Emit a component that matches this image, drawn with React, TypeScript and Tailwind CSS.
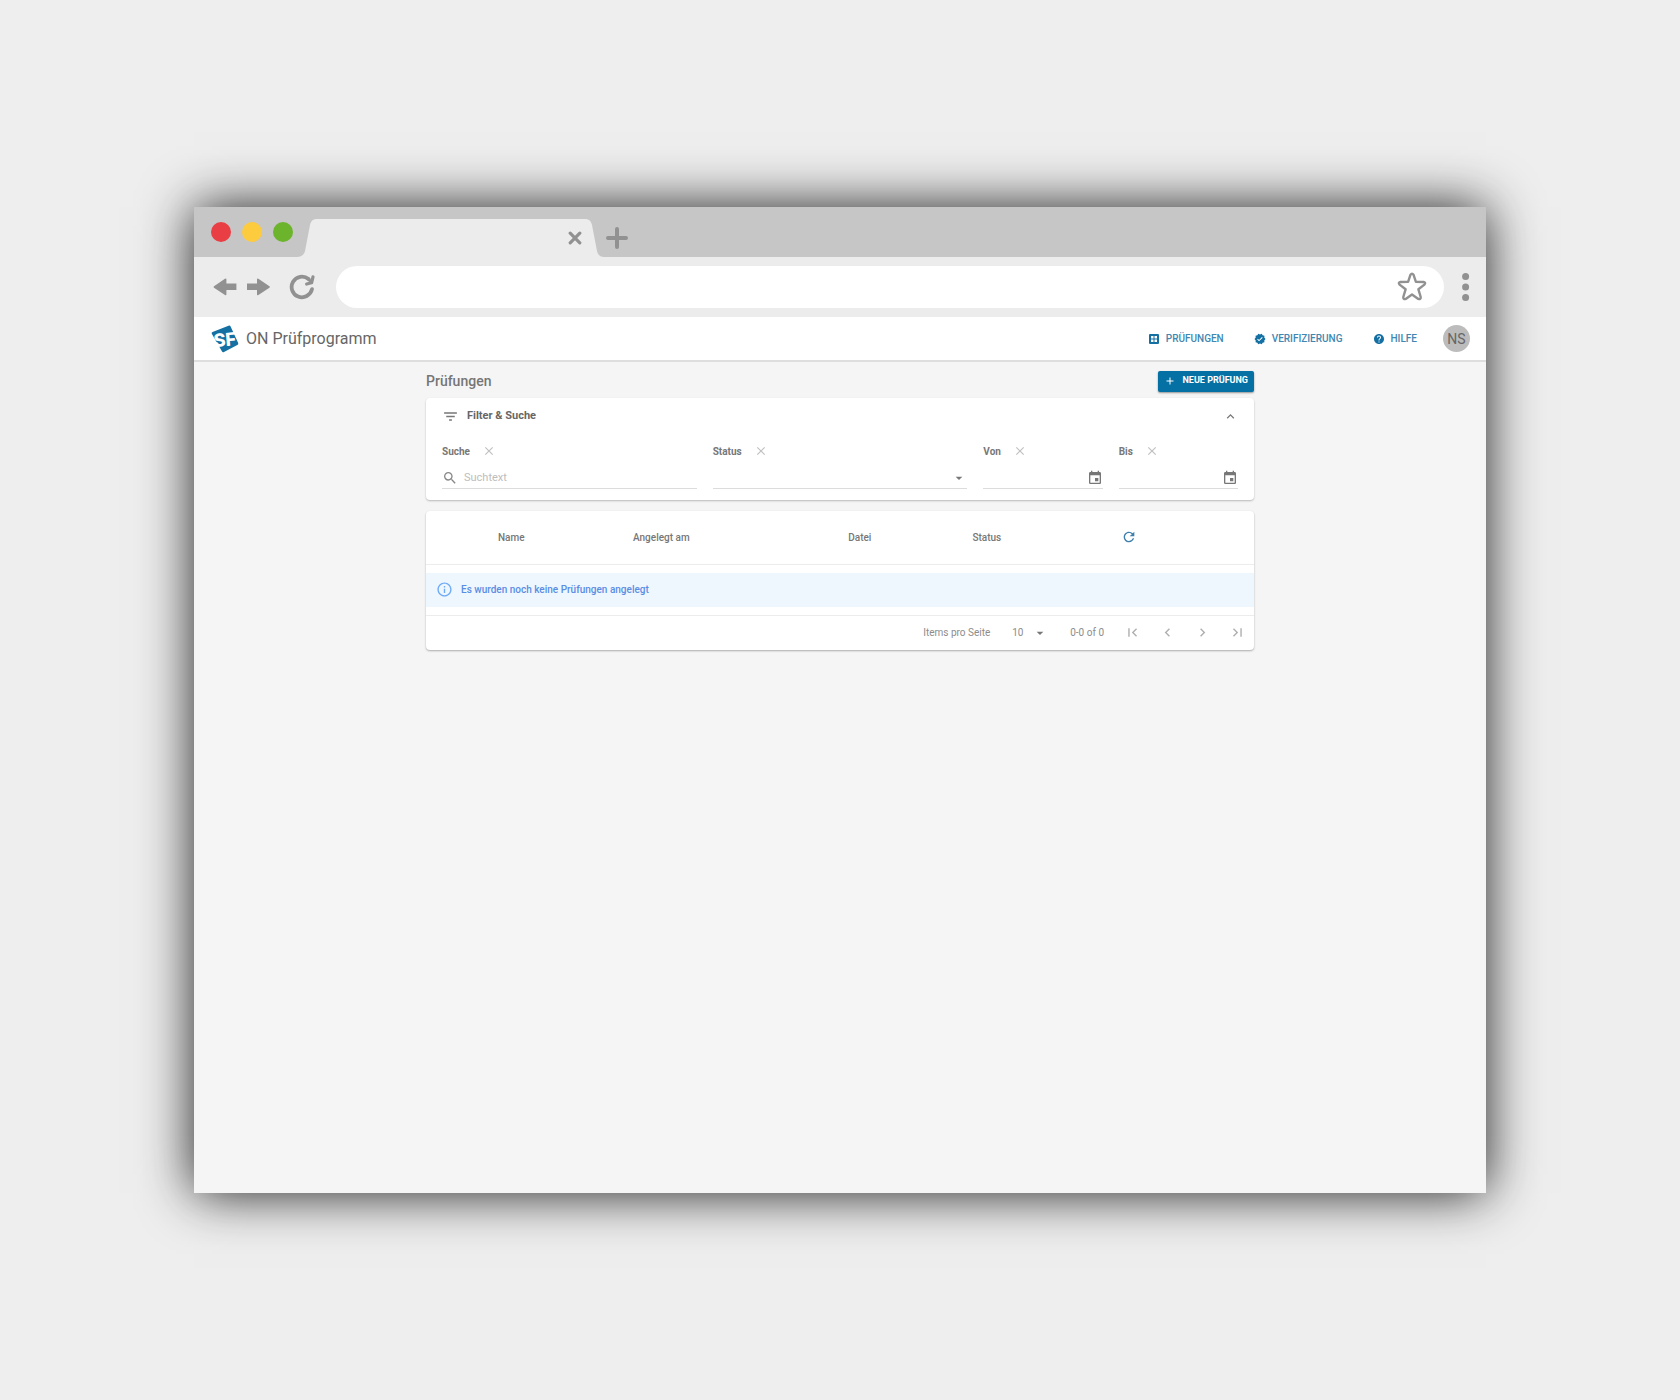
import React from "react";
import {
  MdAdd,
  MdArrowDropDown,
  MdChevronLeft,
  MdChevronRight,
  MdClose,
  MdEvent,
  MdFilterList,
  MdFirstPage,
  MdHelp,
  MdInfoOutline,
  MdKeyboardArrowUp,
  MdLastPage,
  MdRefresh,
  MdSearch,
  MdVerified,
} from "react-icons/md";

function TabStrip() {
  return (
    <div className="flex h-[50px] items-end bg-[#c6c6c6] pl-[17px]">
      <div className="flex gap-[11px] self-start pt-[15px]">
        <button aria-label="Schließen" className="size-5 rounded-full bg-[#e93e43]" />
        <button aria-label="Minimieren" className="size-5 rounded-full bg-[#fdcb3e]" />
        <button aria-label="Maximieren" className="size-5 rounded-full bg-[#6cb42c]" />
      </div>
      <div className="ml-1 flex h-[38px]">
        <svg width="20" height="38" viewBox="0 0 20 38" fill="#ececec" aria-hidden="true">
          <path d="M0 38C4 38 7 36 8 32L13 6C14 2 16 0 20 0V38Z" />
        </svg>
        <div className="flex w-[267px] items-center justify-end bg-[#ececec] pr-0.5">
          <button aria-label="Tab schließen">
            <svg width="14" height="14" viewBox="0 0 14 14" fill="none" stroke="#919191" strokeWidth="3.2" strokeLinecap="round">
              <path d="M2.2 2.2l9.6 9.6M11.8 2.2l-9.6 9.6" />
            </svg>
          </button>
        </div>
        <svg width="20" height="38" viewBox="0 0 20 38" fill="#ececec" aria-hidden="true">
          <path d="M20 38C16 38 14 36 13 32L8 6C7 2 5 0 1 0H0V38Z" />
        </svg>
      </div>
      <button aria-label="Neuer Tab" className="mb-2 ml-0.5">
        <svg width="22" height="22" viewBox="0 0 22 22" fill="none" stroke="#919191" strokeWidth="4" strokeLinecap="round">
          <path d="M11 2v18M2 11h18" />
        </svg>
      </button>
    </div>
  );
}

function AddressBar() {
  return (
    <div className="flex h-[60px] items-center bg-[#ececec] pr-4 pl-[19px] text-[#919191]">
      <button aria-label="Zurück">
        <svg width="24" height="18" viewBox="0 0 24 18" fill="currentColor">
          <path d="M1 8.300L12 .8Q13.400 0 13.400 1.500V5.500H23.400V12H13.400V16.200Q13.400 17.800 12 17L1 9.700Q0 9 1 8.300Z" />
        </svg>
      </button>
      <button aria-label="Vorwärts" className="ml-2.5">
        <svg width="24" height="18" viewBox="0 0 24 18" fill="currentColor">
          <path d="M22.400 8.300L11.400 .8Q10 0 10 1.500V5.500H0V12H10V16.200Q10 17.800 11.400 17L22.400 9.700Q23.400 9 22.400 8.300Z" />
        </svg>
      </button>
      <button aria-label="Neu laden" className="ml-[18px]">
        <svg width="27" height="26" viewBox="0 0 27 26" fill="none" stroke="currentColor" strokeWidth="3.8" strokeLinecap="round" strokeLinejoin="round">
          <path d="M23 15.200A10.300 10.300 0 1 1 19.500 5" />
          <path d="M24 2.800L22.600 8.800L17.600 10" strokeWidth="3.200" />
          <path d="M19.200 4.800L22 8" strokeWidth="3" />
        </svg>
      </button>
      <div className="ml-5 flex h-[42px] flex-1 items-center rounded-full bg-white pr-[17px] pl-5">
        <input aria-label="Adresse" className="h-full min-w-0 flex-1 bg-transparent outline-none" />
        <button aria-label="Lesezeichen">
          <svg width="30" height="30" viewBox="0 0 30 30" fill="none" stroke="currentColor" strokeWidth="2.400" strokeLinejoin="round">
            <path d="M13.500 2.700Q15 .6 16.500 2.700L18.900 9.800L26.600 10Q29.200 10.600 27.400 12.600L21.400 17.300L23.700 25Q23.900 27.700 21.300 26.900L15 22.400L8.700 26.900Q6.100 27.700 6.300 25L8.600 17.300L2.600 12.600Q.8 10.600 3.400 10L11.100 9.800Z" />
          </svg>
        </button>
      </div>
      <button aria-label="Menü" className="ml-[18px]">
        <svg width="8" height="30" viewBox="0 0 8 30" fill="currentColor">
          <circle cx="3.600" cy="4.400" r="3.500" />
          <circle cx="3.600" cy="15" r="3.500" />
          <circle cx="3.600" cy="25.600" r="3.500" />
        </svg>
      </button>
    </div>
  );
}

function Logo() {
  return (
    <svg width="28" height="28" viewBox="0 0 28 28" role="img" aria-label="SF">
      <path d="M1.500 7L17.500 .8Q19 .2 19.600 1.600L27.200 18Q27.700 19.400 26.300 20L13 27Q11.500 27.600 10.900 26.200L.8 8.800Q.2 7.600 1.500 7Z" fill="#1470a3" />
      <text x="2.500" y="21" fontFamily="Inter, sans-serif" fontWeight="800" fontSize="18" fill="#fff" transform="rotate(-5 14 14)">SF</text>
    </svg>
  );
}

function GridIcon() {
  return (
    <svg width="12" height="12" viewBox="0 0 12 12" fill="currentColor" aria-hidden="true">
      <path fillRule="evenodd" d="M2 1h8a1 1 0 0 1 1 1v8a1 1 0 0 1-1 1H2a1 1 0 0 1-1-1V2a1 1 0 0 1 1-1ZM3 3v2.500h2.500V3ZM6.500 3v2.500H9V3ZM3 6.500V9h2.500V6.500ZM6.500 6.500V9H9V6.500Z" />
    </svg>
  );
}

function NavLink({ icon, label }: { icon: React.ReactNode; label: string }) {
  return (
    <a href="#" className="flex items-center gap-1.5 text-[#1470a3]">
      {icon}
      <span className="text-[10px] font-medium text-[#4187b1]">{label}</span>
    </a>
  );
}

function AppHeader() {
  return (
    <header className="flex h-[45px] items-center border-b-2 border-[#dedede] bg-white pr-4 pl-[17px]">
      <Logo />
      <span className="ml-[7px] flex-1 text-base text-[#666]">ON Prüfprogramm</span>
      <nav className="flex items-center gap-[30px]">
        <NavLink icon={<GridIcon />} label="PRÜFUNGEN" />
        <NavLink icon={<MdVerified size={12} />} label="VERIFIZIERUNG" />
        <NavLink icon={<MdHelp size={12} />} label="HILFE" />
      </nav>
      <button className="ml-[26px] size-[27px] rounded-full bg-[#bcbcbc] text-sm text-[#666]">NS</button>
    </header>
  );
}

function Field({ id, label, wide, children }: { id: string; label: string; wide?: boolean; children: React.ReactNode }) {
  return (
    <div className={wide ? "col-span-2" : "col-span-1"}>
      <div className="flex h-4 items-center gap-3">
        <label htmlFor={id} className="text-[10px] font-bold text-[#777]">{label}</label>
        <button aria-label={label + " leeren"} className="text-[#c0c0c0]">
          <MdClose size={14} />
        </button>
      </div>
      <div className="mt-2 flex h-[22px] items-center border-b border-[#dcdcdc]">{children}</div>
    </div>
  );
}

const inputClass = "h-full min-w-0 flex-1 bg-transparent text-[11px] text-[#666] outline-none placeholder:text-[#bdbdbd]";

function FilterCard() {
  return (
    <section className="mt-[5px] rounded-sm bg-white px-4 pb-[11px] shadow-[0_1px_2px_rgba(0,0,0,0.25)]">
      <div className="flex h-9 items-center text-[#777]">
        <MdFilterList size={17} />
        <h2 className="ml-2 flex-1 text-[11px] font-bold text-[#666]">Filter &amp; Suche</h2>
        <button aria-label="Filter einklappen">
          <MdKeyboardArrowUp size={15} />
        </button>
      </div>
      <div className="grid grid-cols-6 gap-x-4 pt-[9px]">
        <Field id="suche" label="Suche" wide>
          <MdSearch size={16} className="mr-1.5 text-[#888]" />
          <input id="suche" type="text" placeholder="Suchtext" className={inputClass} />
        </Field>
        <Field id="status" label="Status" wide>
          <select id="status" className={inputClass + " appearance-none"} />
          <MdArrowDropDown size={16} className="text-[#777]" />
        </Field>
        <Field id="von" label="Von">
          <input id="von" type="text" className={inputClass} />
          <button aria-label="Startdatum wählen" className="text-[#777]">
            <MdEvent size={16} />
          </button>
        </Field>
        <Field id="bis" label="Bis">
          <input id="bis" type="text" className={inputClass} />
          <button aria-label="Enddatum wählen" className="text-[#777]">
            <MdEvent size={16} />
          </button>
        </Field>
      </div>
    </section>
  );
}

function ResultsCard() {
  return (
    <section className="mt-[11px] rounded-sm bg-white shadow-[0_1px_2px_rgba(0,0,0,0.3)]">
      <table className="w-full table-fixed border-b border-[#ececec] text-left text-[10px]">
        <colgroup>
          <col className="w-[25%]" />
          <col className="w-[26%]" />
          <col className="w-[15%]" />
          <col className="w-[18%]" />
          <col className="w-[16%]" />
        </colgroup>
        <thead>
          <tr className="h-[53px] border-b border-[#ececec] text-[#777]">
            <th className="pl-[72px] font-medium">Name</th>
            <th className="font-medium">Angelegt am</th>
            <th className="font-medium">Datei</th>
            <th className="font-medium">Status</th>
            <th>
              <button aria-label="Aktualisieren" className="block text-[#3f7fac]">
                <MdRefresh size={16} />
              </button>
            </th>
          </tr>
        </thead>
        <tbody>
          <tr>
            <td colSpan={5} className="py-2">
              <div className="flex h-[34px] items-center gap-2 bg-[#eff7fe] pl-2.5">
                <MdInfoOutline size={17} className="text-[#6fabf5]" />
                <span className="font-medium text-[#5a8de4]">Es wurden noch keine Prüfungen angelegt</span>
              </div>
            </td>
          </tr>
        </tbody>
      </table>
      <div className="flex h-[34px] items-center justify-end pr-2 text-[10px] text-[#8c8c8c]">
        <label htmlFor="pro-seite">Items pro Seite</label>
        <div className="ml-[22px] flex items-center">
          <select id="pro-seite" className="w-5 appearance-none bg-transparent outline-none">
            <option>10</option>
          </select>
          <MdArrowDropDown size={16} className="text-[#777]" />
        </div>
        <span className="ml-[22px]">0-0 of 0</span>
        <div className="ml-5 flex items-center gap-[18px] text-[#b0b0b0]">
          <button aria-label="Erste Seite"><MdFirstPage size={17} /></button>
          <button aria-label="Vorherige Seite"><MdChevronLeft size={17} /></button>
          <button aria-label="Nächste Seite"><MdChevronRight size={17} /></button>
          <button aria-label="Letzte Seite"><MdLastPage size={17} /></button>
        </div>
      </div>
    </section>
  );
}

export default function App() {
  return (
    <div className="flex min-h-screen flex-col bg-[#eeeeee] px-[194px] py-[207px] font-['Roboto',sans-serif]">
      <div className="flex min-h-[986px] flex-1 flex-col bg-[#f5f5f5] shadow-[0_0_50px_rgba(0,0,0,0.88)]">
        <TabStrip />
        <AddressBar />
        <AppHeader />
        <main className="mx-auto w-full max-w-[828px] pt-[7px]">
          <div className="flex h-6 items-center justify-between">
            <h1 className="text-sm font-medium text-[#757575]">Prüfungen</h1>
            <button className="flex h-[21px] items-center gap-1.5 rounded-xs bg-[#0470a4] px-1.5 text-[9px] font-bold text-white shadow-[0_1px_2px_rgba(0,0,0,0.4)]">
              <MdAdd size={12} />
              NEUE PRÜFUNG
            </button>
          </div>
          <FilterCard />
          <ResultsCard />
        </main>
      </div>
    </div>
  );
}
